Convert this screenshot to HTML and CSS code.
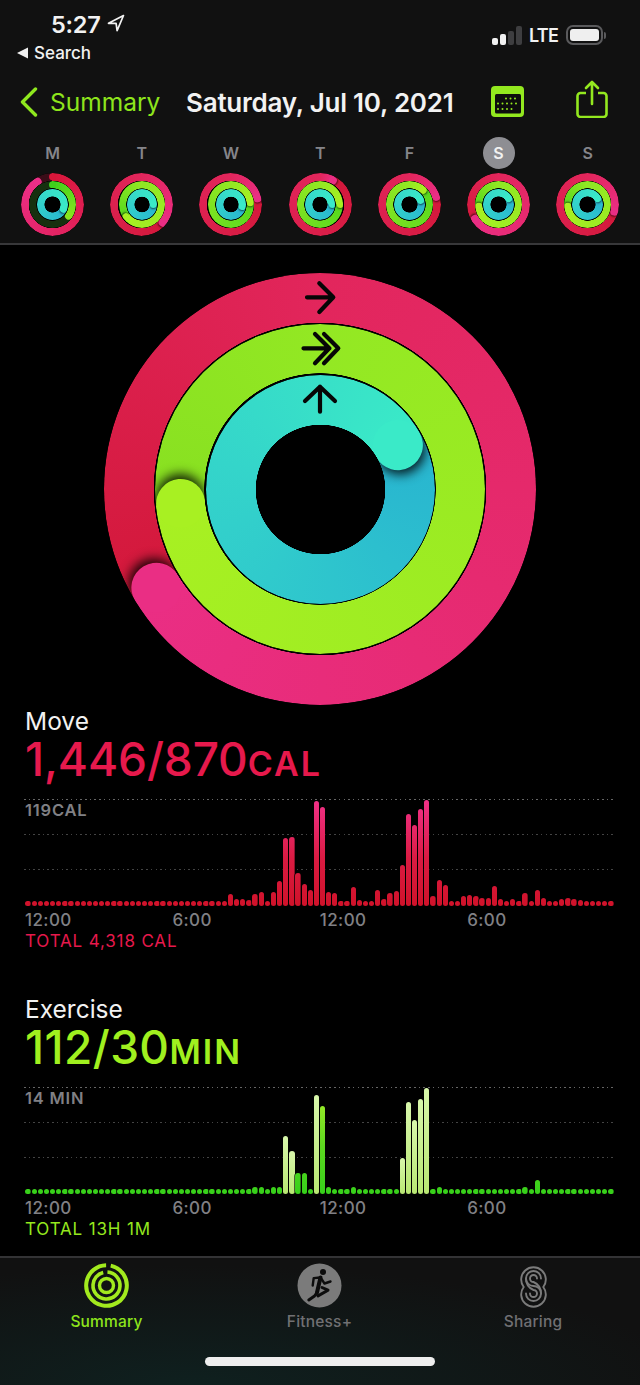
FILE: index.html
```html
<!DOCTYPE html>
<html lang="en">
<head>
<meta charset="utf-8">
<title>Activity</title>
<link rel="stylesheet" href="styles.css">
</head>
<body>
<div class="app">
<header class="head">
  <div class="status">
    <div class="status-left">
      <div class="clock"><span>5:27</span>
        <svg class="loc" width="18" height="18" viewBox="0 0 18 18"><path d="M16.5 1.5 1.5 9.3h7.6l1 7.4z" fill="none" stroke="#f2f2f2" stroke-width="1.7" stroke-linejoin="round"/></svg>
      </div>
      <div class="crumb">
        <svg width="11" height="12" viewBox="0 0 11 12"><path d="M0 6 11 .5v11z" fill="#f0f0f0"/></svg>
        <span>Search</span>
      </div>
    </div>
    <div class="status-right">
      <div class="signal"><i class="s1"></i><i class="s2"></i><i class="s3"></i><i class="s4"></i></div>
      <span class="lte">LTE</span>
      <div class="battery"><i></i></div>
      <i class="nub"></i>
    </div>
  </div>
  <nav class="nav">
    <div class="back">
      <svg width="18" height="30" viewBox="0 0 18 30"><path d="M15.5 2 2.5 15l13 13" fill="none" stroke="#8fe81e" stroke-width="3.4" stroke-linecap="round" stroke-linejoin="round"/></svg>
      <span>Summary</span>
    </div>
    <div class="title">Saturday, Jul 10, 2021</div>
    <div class="cal">
      <svg width="33" height="31" viewBox="0 0 33 31"><rect width="33" height="31" rx="4" fill="#93e81f"/><rect x="4" y="8" width="26" height="19.5" rx="1.5" fill="#0d0d0d"/><g stroke="#93e81f" stroke-width="2" stroke-linecap="round" stroke-dasharray="0 4.5"><path d="M15 12.5h13M7 17.5h22M7 23h14"/></g></svg>
    </div>
    <div class="share">
      <svg width="32" height="38" viewBox="0 0 32 38"><path d="M10 13H4.5A3 3 0 0 0 1.500 16v18a3 3 0 0 0 3 3h23a3 3 0 0 0 3-3V16a3 3 0 0 0-3-3H22" fill="none" stroke="#93e81f" stroke-width="2.600"/><path d="M16 24V2M10 8l6-6 6 6" fill="none" stroke="#93e81f" stroke-width="2.600" stroke-linecap="round" stroke-linejoin="round"/></svg>
    </div>
  </nav>
  <div class="days">
    <div class="day"><span class="letter">M</span>
      <div class="rings mini">
        <div class="ring move open m-open" style="--end:326deg"><i class="cap start"></i><i class="cap"></i></div>
        <div class="ring ex open e-open" style="--end:126deg"><i class="cap start"></i><i class="cap"></i></div>
        <div class="ring st" style="--end:114deg"><i class="cap"></i></div>
      </div>
    </div>
    <div class="day"><span class="letter">T</span>
      <div class="rings mini">
        <div class="ring move" style="--end:130deg"><i class="cap"></i></div>
        <div class="ring ex bright" style="--end:232deg"><i class="cap"></i></div>
        <div class="ring st" style="--end:90deg"><i class="cap"></i></div>
      </div>
    </div>
    <div class="day"><span class="letter">W</span>
      <div class="rings mini">
        <div class="ring move" style="--end:76deg"><i class="cap"></i></div>
        <div class="ring ex" style="--end:85deg"><i class="cap"></i></div>
        <div class="ring st" style="--end:100deg"><i class="cap"></i></div>
      </div>
    </div>
    <div class="day"><span class="letter">T</span>
      <div class="rings mini">
        <div class="ring move" style="--end:28deg"><i class="cap"></i></div>
        <div class="ring ex" style="--end:90deg"><i class="cap"></i></div>
        <div class="ring st" style="--end:90deg"><i class="cap"></i></div>
      </div>
    </div>
    <div class="day"><span class="letter">F</span>
      <div class="rings mini">
        <div class="ring move" style="--end:73deg"><i class="cap"></i></div>
        <div class="ring ex" style="--end:44deg"><i class="cap"></i></div>
        <div class="ring st" style="--end:70deg"><i class="cap"></i></div>
      </div>
    </div>
    <div class="day"><span class="letter badge">S</span>
      <div class="rings mini">
        <div class="ring move" style="--end:239deg"><i class="cap"></i></div>
        <div class="ring ex bright" style="--end:265deg"><i class="cap"></i></div>
        <div class="ring st" style="--end:60deg"><i class="cap"></i></div>
      </div>
    </div>
    <div class="day"><span class="letter">S</span>
      <div class="rings mini">
        <div class="ring move" style="--end:104deg"><i class="cap"></i></div>
        <div class="ring ex bright" style="--end:265deg"><i class="cap"></i></div>
        <div class="ring st" style="--end:60deg"><i class="cap"></i></div>
      </div>
    </div>
  </div>
</header>

<main class="main">
  <div class="hero">
    <div class="rings big">
      <div class="ring move" style="--end:238.700deg"><i class="cap"></i></div>
      <div class="ring ex" style="--end:264.300deg"><i class="cap"></i></div>
      <div class="ring st" style="--end:60.600deg"><i class="cap"></i></div>
      <svg class="arrows" width="432" height="432" viewBox="0 0 432 432"><g fill="none" stroke="#060606" stroke-width="4.200" stroke-linecap="round" stroke-linejoin="round"><path d="M203 24.300h26M215.300 10.300l14 14-14 14.700"/><path d="M199.500 75.300h26M211 61l14.300 14.300L211 90.300M220 61l14.300 14.300L220 90.300"/><path d="M216 138.700v-25M201 128l15-14.300L231 128"/></g></svg>
    </div>
  </div>

  <section class="metric move-m">
    <div class="m-label">Move</div>
    <div class="m-value">1,446/870<small>CAL</small></div>
    <div class="chart">
      <div class="lines"><i></i><i></i><i></i></div>
      <div class="max">119CAL</div>
      <div class="bars"><i></i><i></i><i></i><i></i><i></i><i></i><i></i><i></i><i></i><i></i><i></i><i></i><i></i><i></i><i></i><i></i><i></i><i></i><i></i><i></i><i></i><i></i><i></i><i></i><i></i><i></i><i></i><i></i><i></i><i></i><i></i><i></i><i></i><i style="height:12px"></i><i style="height:7px"></i><i style="height:7px"></i><i style="height:6px"></i><i style="height:12px"></i><i style="height:14px"></i><i style="height:5.400px"></i><i style="height:14px"></i><i style="height:25px"></i><i style="height:68px"></i><i style="height:69px"></i><i style="height:33px"></i><i style="height:22px"></i><i style="height:16px"></i><i style="height:105px"></i><i style="height:99px"></i><i style="height:14px"></i><i style="height:13px"></i><i style="height:5.400px"></i><i></i><i style="height:19px"></i><i style="height:6px"></i><i></i><i></i><i style="height:16px"></i><i style="height:7px"></i><i style="height:13px"></i><i style="height:15px"></i><i style="height:41px"></i><i style="height:92px"></i><i style="height:81px"></i><i style="height:97px"></i><i style="height:106px"></i><i style="height:10px"></i><i style="height:26px"></i><i style="height:21px"></i><i style="height:5.400px"></i><i></i><i style="height:10px"></i><i style="height:11px"></i><i style="height:10px"></i><i style="height:8px"></i><i style="height:8px"></i><i style="height:20px"></i><i style="height:7px"></i><i></i><i style="height:7px"></i><i></i><i style="height:13px"></i><i></i><i style="height:16px"></i><i style="height:8px"></i><i></i><i style="height:5.400px"></i><i style="height:7px"></i><i style="height:8px"></i><i style="height:7px"></i><i style="height:6px"></i><i></i><i></i><i></i><i></i><i></i></div>
    </div>
    <div class="times"><span>12:00</span><span>6:00</span><span>12:00</span><span>6:00</span></div>
    <div class="total">TOTAL 4,318 CAL</div>
  </section>

  <section class="metric ex-m">
    <div class="m-label">Exercise</div>
    <div class="m-value">112/30<small>MIN</small></div>
    <div class="chart">
      <div class="lines"><i></i><i></i><i></i></div>
      <div class="max">14 MIN</div>
      <div class="bars"><i></i><i></i><i></i><i></i><i></i><i></i><i></i><i></i><i></i><i></i><i></i><i></i><i></i><i></i><i></i><i></i><i></i><i></i><i></i><i></i><i></i><i></i><i></i><i></i><i></i><i></i><i></i><i></i><i></i><i></i><i></i><i></i><i></i><i></i><i></i><i></i><i></i><i style="height:7px"></i><i style="height:7px"></i><i></i><i style="height:7px"></i><i style="height:7px"></i><i class="lt" style="height:58px"></i><i class="lt" style="height:43px"></i><i style="height:21px"></i><i style="height:21px"></i><i></i><i class="lt" style="height:99px"></i><i style="height:88px"></i><i style="height:7px"></i><i></i><i></i><i></i><i style="height:7px"></i><i></i><i></i><i></i><i></i><i></i><i></i><i></i><i class="lt" style="height:36px"></i><i class="lt" style="height:92px"></i><i class="lt" style="height:74px"></i><i class="lt" style="height:95px"></i><i class="lt" style="height:106px"></i><i></i><i style="height:7px"></i><i></i><i></i><i></i><i></i><i></i><i></i><i></i><i></i><i></i><i></i><i></i><i></i><i></i><i style="height:7px"></i><i></i><i style="height:14px"></i><i></i><i></i><i></i><i></i><i></i><i></i><i></i><i></i><i></i><i></i><i></i><i></i></div>
    </div>
    <div class="times"><span>12:00</span><span>6:00</span><span>12:00</span><span>6:00</span></div>
    <div class="total">TOTAL 13H 1M</div>
  </section>
</main>

<footer class="tabs">
  <div class="tab-row">
    <div class="tab active">
      <svg width="45" height="45" viewBox="0 0 45 45"><g fill="none" stroke="#a2ea1e"><circle cx="22.500" cy="22.500" r="20.300" stroke-width="4" stroke-dasharray="122 5.500" transform="rotate(-78 22.500 22.500)"/><circle cx="22.500" cy="22.500" r="13.500" stroke-width="3.600" stroke-dasharray="80 4.800" transform="rotate(-86 22.500 22.500)"/><circle cx="22.500" cy="22.500" r="7" stroke-width="3.400"/></g></svg>
      <span>Summary</span>
    </div>
    <div class="tab">
      <svg width="45" height="45" viewBox="0 0 45 45"><circle cx="22.500" cy="22.500" r="22" fill="#7b7b7b"/><circle cx="26" cy="9" r="3" fill="#0c0c0c"/><g fill="none" stroke="#0c0c0c" stroke-linecap="round" stroke-linejoin="round"><path d="M23.500 14.500 20 29.500" stroke-width="4"/><path d="M23 14.500l-6.300.6-1 7.400M23.500 14.500l4 6 6-2" stroke-width="2.400"/><path d="M20 29.500l-2.500 3.500-5.700 4M25 24.500l6 2.700-10 5.700" stroke-width="3"/></g></svg>
      <span>Fitness+</span>
    </div>
    <div class="tab">
      <svg width="45" height="45" viewBox="0 0 45 45"><g fill="none" stroke="#7b7b7b" stroke-width="1.900" stroke-linecap="round"><path d="M12.700 24A12.300 12.300 0 1 1 32.300 24 12.300 12.300 0 1 1 12.700 24z"/><path d="M30 15.500a7.500 7.500 0 1 0-7.500 7.500 7.500 7.500 0 1 1-7.500 7.500"/><path d="M26 15.500a3.500 3.500 0 1 0-3.500 3.500 11.500 11.500 0 0 1 7.500 11.500"/><path d="M19 30.500a3.500 3.500 0 1 0 3.500-3.500A11.500 11.500 0 0 1 15 15.500"/></g></svg>
      <span>Sharing</span>
    </div>
  </div>
  <div class="home"></div>
</footer>
</div>
</body>
</html>
```
FILE: styles.css
```css
* { box-sizing: border-box; margin: 0; padding: 0; }
html, body { width: 640px; height: 1385px; background: #000; overflow: hidden; }
body { font-family: Inter, "Liberation Sans", sans-serif; color: #f2f2f2; -webkit-font-smoothing: antialiased; }
i { display: block; font-style: normal; }
.app { display: flex; flex-direction: column; width: 640px; height: 1385px; }

/* Header */
.head { height: 245px; flex: none; background: #111; border-bottom: 2px solid #38383a; }
.status { display: flex; justify-content: space-between; height: 80px; padding-top: 8px; }
.status-left { padding-left: 17px; }
.clock { display: flex; align-items: center; height: 32px; padding-left: 34px; font-size: 23.500px; font-weight: 600; letter-spacing: -.2px; }
.loc { margin-left: 6px; margin-top: -2px; }
.crumb { display: flex; align-items: center; gap: 6px; height: 26px; font-size: 17px; font-weight: 500; }
.status-right { display: flex; align-items: center; height: 54px; padding-right: 34px; }
.signal { display: flex; align-items: flex-end; gap: 2px; height: 19px; margin-top: 1px; }
.signal i { width: 6px; border-radius: 2px; background: #3e3e40; }
.signal .s1 { height: 7px; background: #f2f2f2; }
.signal .s2 { height: 11px; background: #f2f2f2; }
.signal .s3 { height: 14px; }
.signal .s4 { height: 19px; }
.lte { margin-left: 7px; font-size: 18px; font-weight: 600; letter-spacing: -.8px; }
.battery { width: 37px; height: 20px; margin-left: 8px; padding: 2px; border: 2px solid #5a5a5c; border-radius: 7px; }
.battery i { height: 100%; background: #efefef; border-radius: 3px; }
.nub { width: 2px; height: 7px; background: #5a5a5c; border-radius: 0 2px 2px 0; margin-left: 1px; }

.nav { display: flex; align-items: center; height: 44px; padding-left: 20px; }
.back { display: flex; align-items: center; gap: 12px; width: 166px; color: #8ee51c; font-size: 24.500px; }
.title { width: 305px; font-size: 26px; font-weight: 600; letter-spacing: -.23px; }
.cal { width: 85px; height: 31px; margin-top: -1px; }
.share { margin-top: -2px; }

.days { display: grid; grid-template-columns: repeat(7, 89.200px); margin-top: 13px; padding-left: 8px; }
.day { display: flex; flex-direction: column; align-items: center; gap: 4px; }
.letter { display: flex; align-items: center; justify-content: center; width: 32px; height: 32px; border-radius: 50%; color: #85858a; font-size: 16px; font-weight: 600; }
.badge { background: #8e8e93; color: #f2f2f2; }

/* Rings */
.rings { display: grid; border-radius: 50%; background: #000; }
.rings > * { grid-area: 1 / 1; place-self: center; }
.ring {
  display: grid; place-items: center; width: var(--d); height: var(--d); border-radius: 50%;
  --r: calc((var(--d) - var(--w)) / 2);
  background: conic-gradient(var(--c0), var(--c1) var(--end), var(--c2) 0, var(--c3));
  -webkit-mask: radial-gradient(closest-side, transparent calc(100% - var(--w) - .5px), #000 calc(100% - var(--w)));
  mask: radial-gradient(closest-side, transparent calc(100% - var(--w) - .5px), #000 calc(100% - var(--w)));
}
.cap {
  display: block; grid-area: 1 / 1; width: var(--w); height: var(--w); border-radius: 50%; background: var(--c1);
  transform: rotate(var(--end)) translateY(calc(var(--r) * -1));
}
.cap::before {
  content: ""; display: block; width: 100%; height: 100%; border-radius: 50%;
  box-shadow: var(--sh);
  clip-path: inset(-40px -40px -40px 50%);
}
.cap.start { background: var(--c0); transform: translateY(calc(var(--r) * -1)); }
.cap.start::before { box-shadow: none; }
.ring.move { --c0: #e2265c; --c1: #ea2e84; --c2: #d3183a; --c3: #e2265c; }
.ring.ex { --c0: #93e823; --c1: #a8f022; --c2: #88e021; --c3: #93e823; }
.ring.st { --c0: #38e0c8; --c1: #3aeac8; --c2: #28b4d0; --c3: #38e0c8; }

.big { width: 432px; height: 432px; background: transparent; }
.big .ring { --sh: 5px 0 11px rgba(0, 0, 0, .85); }
.big .move { --d: 432px; --w: 49.500px; }
.big .ex { --d: 330px; --w: 49px; }
.big .st { --d: 229px; --w: 49.500px; }
.arrows { position: relative; z-index: 1; }

.mini { width: 63px; height: 63px; }
.mini .ring { --sh: 1px 0 2px rgba(0, 0, 0, .6); }
.mini .move { --d: 63px; --w: 7.500px; }
.mini .ex { --d: 46.500px; --w: 7px; }
.mini .st { --d: 30.500px; --w: 7.200px; }
.mini .ring.ex { --c2: #55d81e; }
.mini .ring.ex.bright { --c0: #8fe724; }
.mini .ring.move.m-open { --c0: #d9173a; --c1: #ec2f88; --c2: #3a0d18; --c3: #3a0d18; --sh: none; }
.mini .ring.ex.e-open { --c0: #3fd01c; --c1: #88e620; --c2: #16300f; --c3: #16300f; --sh: none; }

/* Main */
.main { flex: 1; padding-top: 28px; background: #000; }
.hero { display: flex; justify-content: center; height: 432px; }
.metric { padding-left: 25px; }
.move-m { margin-top: 3px; --accent: #e6194c; --b0: #d0122a; --bm: #da1b42; --b1: #f03188; }
.ex-m { margin-top: 45px; --accent: #a0f01f; --b0: #36d01a; --bm: #5cd81f; --b1: #aaf02a; }
.m-label { height: 26px; font-size: 24.500px; line-height: 26px; }
.m-value { height: 44px; margin-top: 3px; color: var(--accent); font-size: 46px; line-height: 44px; font-weight: 500; letter-spacing: -.1px; }
.ex-m .m-value { letter-spacing: .4px; }
.m-value small { font-size: 34px; font-weight: 600; letter-spacing: 2px; }

.chart { display: grid; width: 589px; height: 107px; margin-top: 18px; }
.chart > * { grid-area: 1 / 1; }
.lines { display: flex; flex-direction: column; gap: 34px; margin-left: -1px; }
.lines i { height: 1px; background: repeating-linear-gradient(to right, #666 0 1.500px, transparent 1.500px 4.700px); }
.lines i + i { background: repeating-linear-gradient(to right, #444 0 1.500px, transparent 1.500px 4.700px); }
.max { padding-top: 1px; color: #808085; font-size: 16.500px; line-height: 20px; font-weight: 600; letter-spacing: .8px; }
.bars { display: grid; grid-template-columns: repeat(96, 1fr); align-items: end; }
.bars i {
  height: 5.300px; margin: 0 .45px; border-radius: 3px; box-shadow: 0 0 0 .6px #000;
  background: linear-gradient(to top, var(--b0), var(--bm) 45%, var(--b1)) bottom / 100% 106px no-repeat;
}
.bars i.lt { background: linear-gradient(to top, #b8e772, #d8f7ab); }

.times { display: grid; grid-template-columns: repeat(4, 147.400px); height: 20px; margin-top: 4px; color: #808085; font-size: 17px; line-height: 20px; font-weight: 500; letter-spacing: .4px; }
.total { height: 20px; margin-top: 1px; color: var(--accent); font-size: 17px; line-height: 20px; letter-spacing: .85px; }
.ex-m .total { color: #95e81e; }

/* Tabs */
.tabs { height: 129px; flex: none; border-top: 2px solid #333335; background: radial-gradient(ellipse 500px 120px at 30% 100%, #0f201f, transparent), #111; }
.tab-row { display: grid; grid-template-columns: 213px 213px 214px; padding-top: 5px; }
.tab { display: flex; flex-direction: column; align-items: center; gap: 4px; color: #707073; font-size: 15.500px; line-height: 20px; font-weight: 500; letter-spacing: .2px; }
.tab.active { color: #8ee51c; }
.home { width: 230px; height: 9px; margin: 25px auto 0; border-radius: 5px; background: #eee; }
```
